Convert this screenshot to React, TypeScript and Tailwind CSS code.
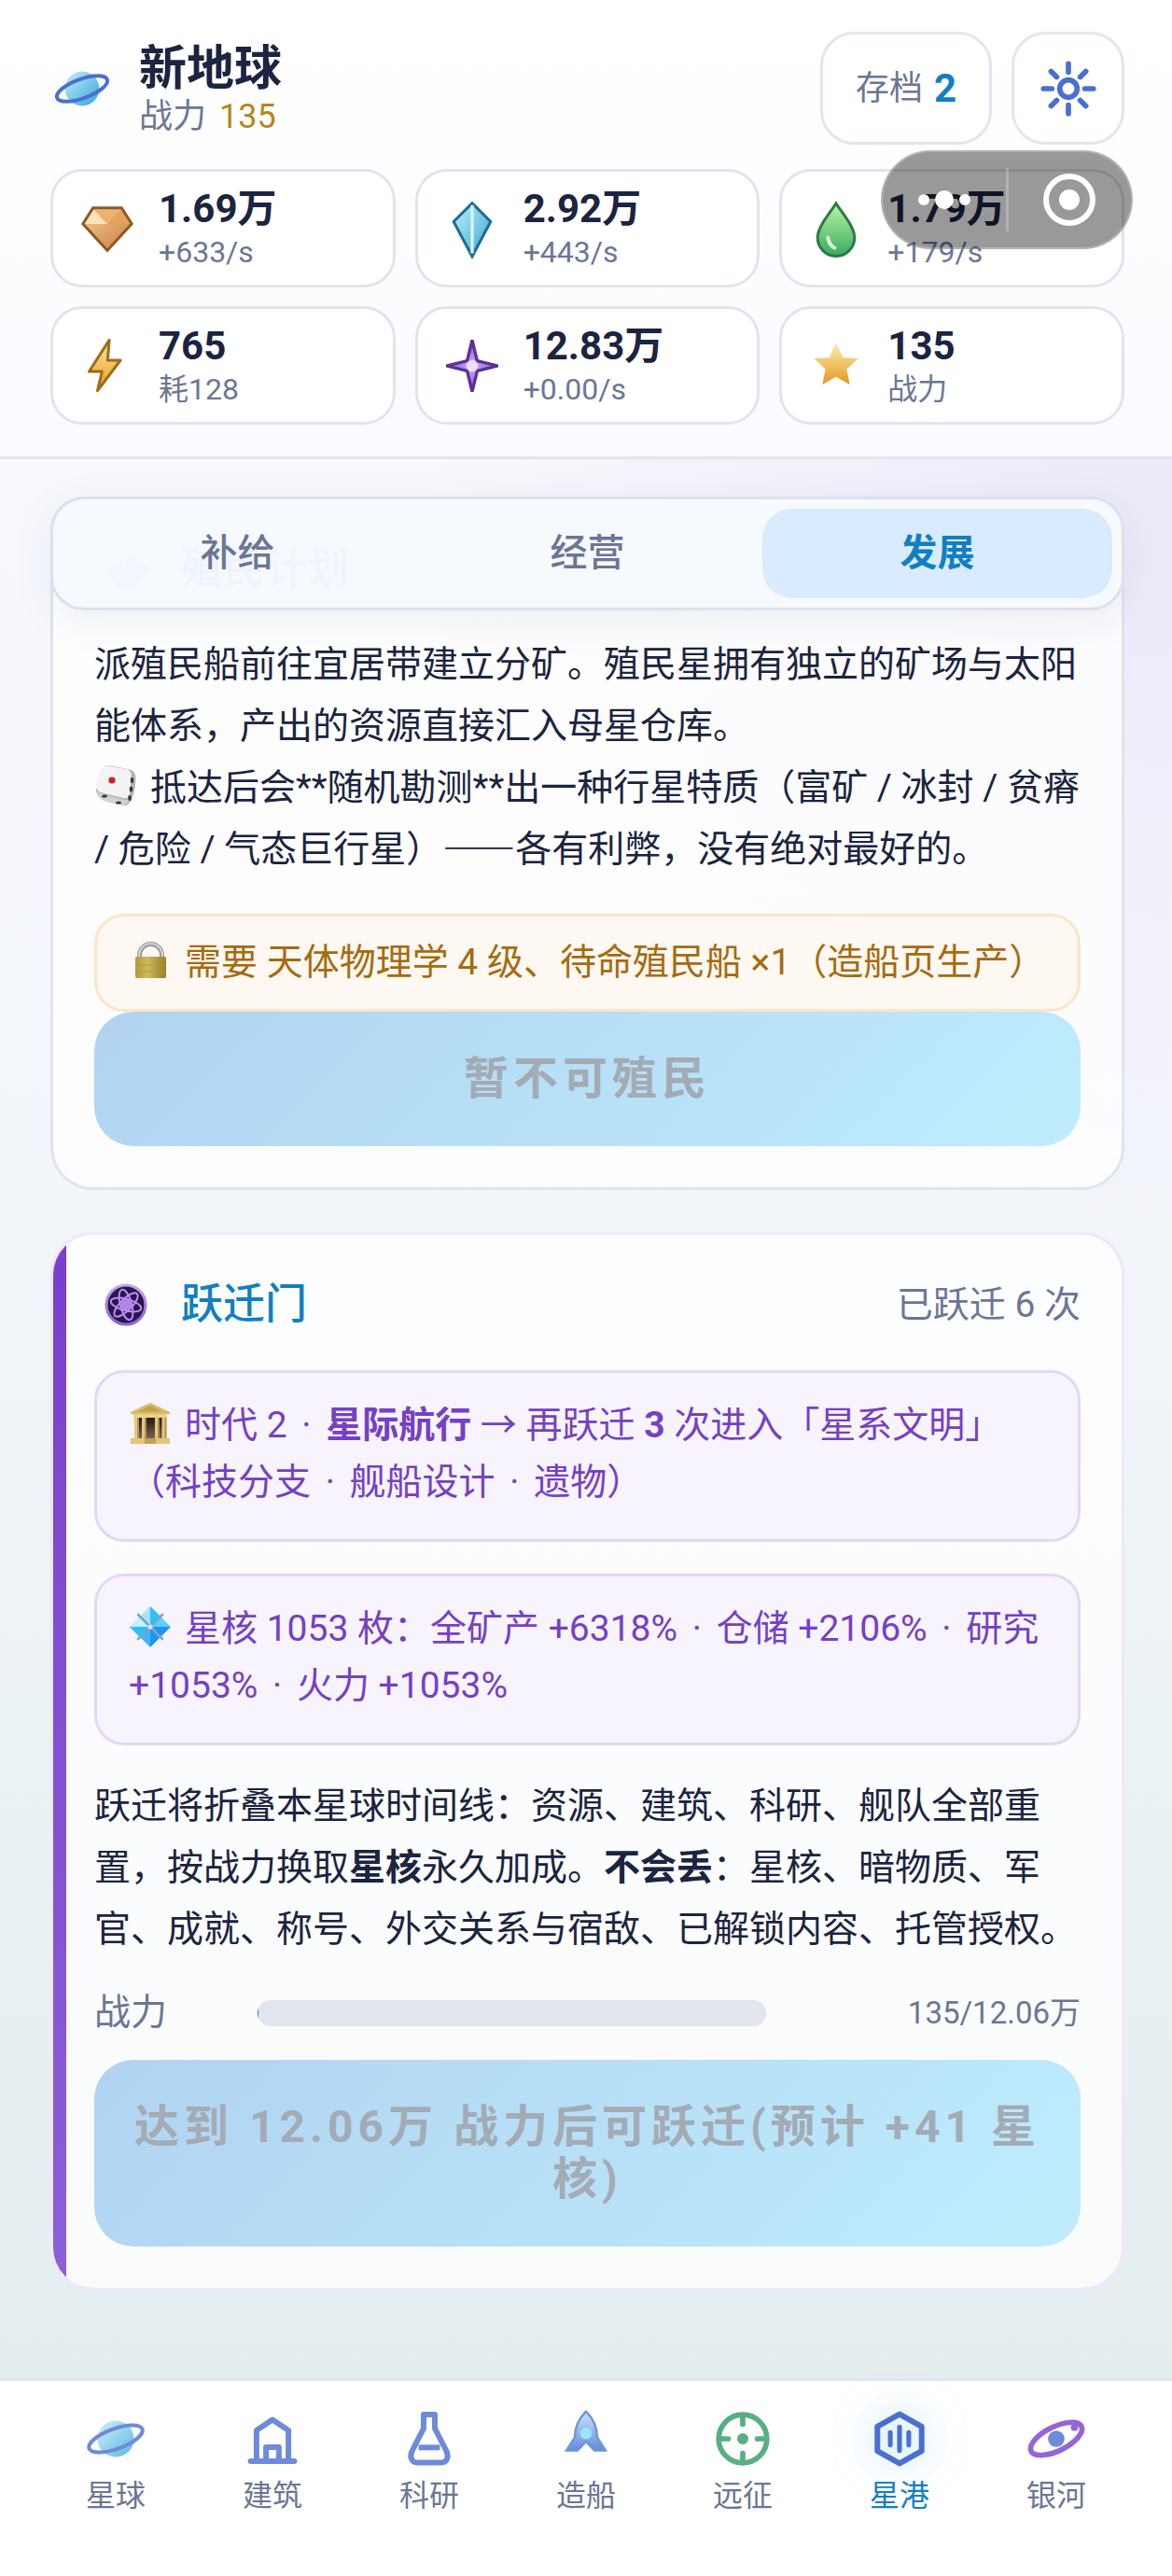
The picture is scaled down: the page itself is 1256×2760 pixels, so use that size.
import type { ReactNode } from "react";

type IconProps = { className?: string };

function PlanetIcon({ className }: IconProps) {
  return (
    <svg viewBox="0 0 24 24" fill="none" className={className} aria-hidden="true">
      <defs>
        <linearGradient id="planet" x1="0" y1="0" x2="1" y2="1">
          <stop offset="0" stopColor="#c4effa" />
          <stop offset="1" stopColor="#34a5d8" />
        </linearGradient>
      </defs>
      <circle cx="12" cy="12" r="6.5" fill="url(#planet)" />
      <ellipse cx="12" cy="12" rx="10.1" ry="3.6" stroke="#4a6fd0" strokeWidth="1.4" transform="rotate(-20 12 12)" />
    </svg>
  );
}

function SettingsIcon({ className }: IconProps) {
  return (
    <svg viewBox="0 0 24 24" fill="none" stroke="#4a6fd0" strokeWidth="1.9" strokeLinecap="round" className={className} aria-hidden="true">
      <circle cx="12" cy="12" r="3.1" />
      <path d="M12 3.1v3M12 17.9v3M3.1 12h3M17.9 12h3M5.8 5.8l2 2M16.2 16.2l2 2M5.8 18.2l2-2M16.2 7.8l2-2" />
    </svg>
  );
}

function MetalIcon({ className }: IconProps) {
  return (
    <svg viewBox="0 0 24 24" className={className} aria-hidden="true">
      <defs>
        <linearGradient id="metal" x1="0" y1="0" x2="1" y2="1">
          <stop offset="0" stopColor="#f7cf98" />
          <stop offset="1" stopColor="#c47d3c" />
        </linearGradient>
      </defs>
      <path d="M6.9 4.6h10.2l3.6 5.7L12 19.8l-8.7-9.5z" fill="url(#metal)" stroke="#8f5722" strokeWidth="1" />
      <path d="M7.1 5.3 12 10.3H3.9z" fill="#fde3bd" />
      <path d="M7.4 5.3h9.2L12 10.3z" fill="#efb173" />
      <path d="M16.8 5.3 12 10.3h8.1z" fill="#e5a15e" />
    </svg>
  );
}

function CrystalIcon({ className }: IconProps) {
  return (
    <svg viewBox="0 0 24 24" className={className} aria-hidden="true">
      <defs>
        <linearGradient id="crystal" x1="0" y1="0" x2="1" y2="1">
          <stop offset="0" stopColor="#c0f1fb" />
          <stop offset="1" stopColor="#3aa3d3" />
        </linearGradient>
      </defs>
      <path d="M12 2.9 18.6 9.5 12 21.9 5.4 9.5z" fill="url(#crystal)" stroke="#1c6c94" strokeWidth="1" />
      <path d="M12 3.6v17.2" stroke="#d5f5fd" strokeWidth="1.1" />
    </svg>
  );
}

function DropIcon({ className }: IconProps) {
  return (
    <svg viewBox="0 0 24 24" className={className} aria-hidden="true">
      <defs>
        <linearGradient id="drop" x1="0" y1="0" x2="0" y2="1">
          <stop offset="0" stopColor="#b9f5a8" />
          <stop offset="1" stopColor="#3aaa5c" />
        </linearGradient>
      </defs>
      <path
        d="M12 3C14.6 7 18.6 11.4 18.6 15.2a6.6 6.6 0 0 1-13.2 0C5.4 11.4 9.4 7 12 3z"
        fill="url(#drop)"
        stroke="#2c7a45"
        strokeWidth="1"
      />
      <path d="M9.1 15.2c.2 1.7 1 3 2.4 3.7" fill="none" stroke="#d9f9d6" strokeWidth="1.3" strokeLinecap="round" />
    </svg>
  );
}

function EnergyIcon({ className }: IconProps) {
  return (
    <svg viewBox="0 0 24 24" className={className} aria-hidden="true">
      <defs>
        <linearGradient id="energy" x1="0" y1="0" x2="0" y2="1">
          <stop offset="0" stopColor="#fdea9c" />
          <stop offset="1" stopColor="#e8962a" />
        </linearGradient>
      </defs>
      <path
        d="M12.7 2.8 12.1 10h4.6L8.5 20.9l1.6-6.9H5.5z"
        fill="url(#energy)"
        stroke="#a06c16"
        strokeWidth="1"
        strokeLinejoin="round"
      />
    </svg>
  );
}

function DarkMatterIcon({ className }: IconProps) {
  return (
    <svg viewBox="0 0 24 24" className={className} aria-hidden="true">
      <defs>
        <radialGradient id="dark">
          <stop offset="0" stopColor="#d0b0fa" />
          <stop offset="1" stopColor="#8350d6" />
        </radialGradient>
      </defs>
      <path
        d="M12 2.8 13.8 10.2 21.2 12 13.8 13.8 12 21.2 10.2 13.8 2.8 12 10.2 10.2z"
        fill="url(#dark)"
        stroke="#5b3094"
        strokeWidth="1.1"
      />
      <circle cx="12" cy="12" r="2.1" fill="#eadffa" />
    </svg>
  );
}

function StarIcon({ className }: IconProps) {
  return (
    <svg viewBox="0 0 24 24" className={className} aria-hidden="true">
      <defs>
        <linearGradient id="star" x1="0" y1="0" x2="0" y2="1">
          <stop offset="0" stopColor="#fdf0b8" />
          <stop offset="1" stopColor="#e5981e" />
        </linearGradient>
      </defs>
      <path
        d="M12 3.5 14.4 9 19.9 9.3 15.8 13.2 16.9 18.7 12 15.9 7.1 18.7 8.2 13.2 4.1 9.3 9.6 9z"
        fill="url(#star)"
      />
    </svg>
  );
}

function ColonyShipIcon({ className }: IconProps) {
  return (
    <svg viewBox="0 0 24 24" fill="#94a6cf" className={className} aria-hidden="true">
      <path d="M12.700 6.500h3.200l-.6 3.600 5.200.9c-.4 2.400-1.500 4-3.400 4.800l-2 3.200H9.300l-2-3.300-4.300-2.700 6.200-2.600h2.900z" />
    </svg>
  );
}

function GateIcon({ className }: IconProps) {
  return (
    <svg viewBox="0 0 24 24" className={className} aria-hidden="true">
      <defs>
        <linearGradient id="gate-ring" x1="0" y1="0" x2="0" y2="1">
          <stop offset="0" stopColor="#c5a4ee" />
          <stop offset="1" stopColor="#8f62cf" />
        </linearGradient>
      </defs>
      <circle cx="12" cy="12" r="7.4" fill="#291650" stroke="url(#gate-ring)" strokeWidth="1.1" />
      <g fill="none" stroke="#bd90f0" strokeWidth=".7">
        <ellipse cx="12" cy="12" rx="5.9" ry="2.2" transform="rotate(15 12 12)" />
        <ellipse cx="12" cy="12" rx="5.9" ry="2.2" transform="rotate(75 12 12)" />
        <ellipse cx="12" cy="12" rx="5.9" ry="2.2" transform="rotate(135 12 12)" />
      </g>
      <circle cx="12" cy="12" r="2.1" fill="#b184ea" />
    </svg>
  );
}

const inlineIcon = "mr-3.5 inline-block size-[46px] align-[-8px]";

function DiceIcon() {
  return (
    <svg viewBox="0 0 46 46" className={inlineIcon} role="img" aria-label="骰子">
      <path
        d="M12 1.5h7l19 4c3.500.7 6 3.500 6.300 8 .4 7-1 17-4.800 25-1.800 4-4.500 6-8.500 5.400L14 40C7 38 2 33 2 27z"
        fill="#b4b4b8"
      />
      <path d="M9 4c2-2 5-2.700 9-2l16 3c4 .8 6 3.200 5.700 7.500L38 31c-.4 4.500-3 6-7 5L9 30.500c-5-1.200-7-4-7-8.500 0-6 3-14 7-18z" fill="#f3f3f5" />
      <path d="M3 28c3 3 6 4 10 5l18 5c4 1 6.500-.5 7.500-4-.3 5-3 9-7.500 9.500L14 40C8 38 4 34 3 28z" fill="#d2d2d5" />
      <circle cx="19" cy="17" r="3.600" fill="#cf1f2b" />
      <g fill="#3a3a3d">
        <ellipse cx="40.500" cy="17" rx="1.800" ry="3" />
        <ellipse cx="39.500" cy="26.500" rx="1.800" ry="3" />
        <ellipse cx="38" cy="36" rx="1.800" ry="3" />
        <ellipse cx="11" cy="34" rx="3" ry="1.600" />
        <ellipse cx="26" cy="41" rx="3" ry="1.600" />
      </g>
    </svg>
  );
}

function LockIcon() {
  return (
    <svg viewBox="0 0 46 46" className={inlineIcon} role="img" aria-label="锁定">
      <defs>
        <linearGradient id="lock-body" x1="0" y1="0" x2="1" y2="0">
          <stop offset="0" stopColor="#b39a3a" />
          <stop offset=".4" stopColor="#cdb95a" />
          <stop offset="1" stopColor="#96802a" />
        </linearGradient>
      </defs>
      <path d="M11.500 25V17.500a12 12 0 0 1 24 0V25" fill="none" stroke="#9b9da1" strokeWidth="5" />
      <path d="M11 25V17.500a12.500 12.500 0 0 1 25 0V25" fill="none" stroke="#dcdde0" strokeWidth="1.600" />
      <rect x="7" y="19" width="33" height="23" rx="2" fill="url(#lock-body)" />
      <path d="M8 28h31M8 35h31" stroke="#b09a40" strokeWidth="1" />
    </svg>
  );
}

function TempleIcon() {
  return (
    <svg viewBox="0 0 46 46" className={inlineIcon} role="img" aria-label="时代">
      <defs>
        <linearGradient id="temple-door" x1="0" y1="0" x2="0" y2="1">
          <stop offset="0" stopColor="#1d100a" />
          <stop offset="1" stopColor="#7a6257" />
        </linearGradient>
      </defs>
      <path d="M7 15h32v24H7z" fill="url(#temple-door)" />
      <path d="M23 1 44 11v2H2v-2z" fill="#d8bb68" />
      <path d="M23 4 36 10.500H10z" fill="#c3a24f" />
      <path d="M5 13h36v4H5z" fill="#e8d28c" />
      <path d="M6 17h5v22H6zM14 17h4.500v22H14zM28 17h4.500v22H28zM35.500 17h5v22h-5z" fill="#e2c97d" />
      <path d="M9 17h2v22H9zM17 17h1.500v22H17zM31 17h1.500v22H31zM38.500 17h2v22h-2z" fill="#b7964a" />
      <path d="M2 39h42v6H2z" fill="#e0c678" />
      <path d="M17 39h12v6H17z" fill="#c2a152" />
    </svg>
  );
}

function StarCoreIcon() {
  return (
    <svg viewBox="0 0 46 46" className={inlineIcon} role="img" aria-label="星核">
      <path d="M23 1v22H1z" fill="#a5e4fb" />
      <path d="M23 1l22 22H23z" fill="#5fd0fc" />
      <path d="M1 23h22v22z" fill="#44b4f7" />
      <path d="M45 23H23v22z" fill="#1f93f4" />
      <path d="M23 1l11 11-11 11zM1 23l11 11 11-11z" fill="#2cc0fb" />
      <path d="M12 12l11 11H1z" fill="#c8f0fd" />
      <path d="M10 10l26 26M36 10 10 36" stroke="#7aa3c4" strokeWidth="2.600" strokeLinecap="round" />
      <circle cx="23" cy="23" r="2.600" fill="#cfe9f7" />
    </svg>
  );
}

function BuildingIcon({ className }: IconProps) {
  return (
    <svg viewBox="0 0 24 24" fill="none" stroke="#4a6fd0" strokeWidth="2" strokeLinejoin="round" className={className} aria-hidden="true">
      <path d="M6.300 20V9L12 5.200 17.700 9v11M9.700 20v-5h4.600v5" />
      <path d="M4.200 20h15.600" strokeLinecap="round" />
    </svg>
  );
}

function FlaskIcon({ className }: IconProps) {
  return (
    <svg viewBox="0 0 24 24" fill="none" stroke="#4a6fd0" strokeWidth="2" strokeLinejoin="round" className={className} aria-hidden="true">
      <path d="M10 3.300h4v5l4.200 8.200c.9 2.200 0 4-2 4H7.800c-2 0-2.900-1.800-2-4L10 8.300z" />
      <path d="M8.200 15.100h7.600" />
    </svg>
  );
}

function RocketIcon({ className }: IconProps) {
  return (
    <svg viewBox="0 0 24 24" className={className} aria-hidden="true">
      <defs>
        <linearGradient id="rocket" x1="0" y1="0" x2="0" y2="1">
          <stop offset="0" stopColor="#bfe0fb" />
          <stop offset="1" stopColor="#3f6fd0" />
        </linearGradient>
      </defs>
      <path
        d="M12 2.200c2.700 2.700 4 6 4 9.300l3 4.700h-4L12 13l-3 3.200H5l3-4.700c0-3.300 1.300-6.600 4-9.300z"
        fill="url(#rocket)"
        stroke="#4a7bd2"
        strokeWidth=".8"
      />
      <circle cx="12" cy="10.100" r="2.100" fill="#7fe0f8" />
    </svg>
  );
}

function ExpeditionIcon({ className }: IconProps) {
  return (
    <svg viewBox="0 0 24 24" fill="none" stroke="#2f9c68" strokeWidth="1.900" strokeLinecap="round" className={className} aria-hidden="true">
      <circle cx="12" cy="12" r="8.600" />
      <path d="M12 3.600v3.200M12 17.200v3.200M3.600 12h3.200M17.200 12h3.200" />
      <circle cx="12" cy="12" r="2" fill="#2f9c68" stroke="none" />
    </svg>
  );
}

function StarportIcon({ className }: IconProps) {
  return (
    <svg viewBox="0 0 24 24" fill="none" stroke="#4a6fd0" strokeWidth="2" strokeLinecap="round" strokeLinejoin="round" className={className} aria-hidden="true">
      <path d="M12 3.200 19.900 7.600v8.800L12 20.800 4.100 16.400V7.600z" />
      <path d="M8.700 9.800v4.400M12 7.800v8.400M15.300 9.800v4.400" strokeWidth="1.700" />
    </svg>
  );
}

function GalaxyIcon({ className }: IconProps) {
  return (
    <svg viewBox="0 0 24 24" fill="none" className={className} aria-hidden="true">
      <ellipse cx="12" cy="12" rx="10" ry="4.300" stroke="#7a3fcd" strokeWidth="1.900" transform="rotate(-26 12 12)" />
      <circle cx="12" cy="12" r="2.950" fill="#4a6fd0" />
      <circle cx="18.500" cy="7.900" r="1.300" fill="#7a3fcd" />
    </svg>
  );
}

const resources = [
  { value: "1.69万", note: "+633/s", Icon: MetalIcon },
  { value: "2.92万", note: "+443/s", Icon: CrystalIcon },
  { value: "1.79万", note: "+179/s", Icon: DropIcon },
  { value: "765", note: "耗128", Icon: EnergyIcon },
  { value: "12.83万", note: "+0.00/s", Icon: DarkMatterIcon },
  { value: "135", note: "战力", Icon: StarIcon },
];

const tabs = ["补给", "经营", "发展"];

const navItems = [
  { label: "星球", Icon: PlanetIcon },
  { label: "建筑", Icon: BuildingIcon },
  { label: "科研", Icon: FlaskIcon },
  { label: "造船", Icon: RocketIcon },
  { label: "远征", Icon: ExpeditionIcon },
  { label: "星港", Icon: StarportIcon },
  { label: "银河", Icon: GalaxyIcon },
];

// Floating host-app capsule: menu and close
function Capsule() {
  return (
    <div className="absolute top-[161px] right-[42px] flex h-[106px] w-[270px] items-center rounded-full border-2 border-white/25 bg-black/40">
      <button type="button" aria-label="更多" className="flex flex-1 items-center justify-center gap-1.5">
        <span className="size-3 rounded-full bg-white" />
        <span className="size-5 rounded-full bg-white" />
        <span className="size-3 rounded-full bg-white" />
      </button>
      <span className="h-[68px] w-[3px] bg-white/25" />
      <button type="button" aria-label="关闭" className="flex flex-1 items-center justify-center">
        <span className="flex size-14 items-center justify-center rounded-full border-6 border-white">
          <span className="size-[22px] rounded-full bg-white" />
        </span>
      </button>
    </div>
  );
}

function Header() {
  return (
    <header className="relative border-b-3 border-[#e0e5ee] bg-linear-to-b from-white to-[#fafbff] pt-[34px] pr-[51px] pb-[34px] pl-[54px]">
      <div className="flex items-center">
        <PlanetIcon className="size-[68px]" />
        <div className="ml-[27px] flex-1 pt-1.5">
          <h1 className="text-[51px] leading-[54px] font-bold">新地球</h1>
          <p className="flex gap-3.5 text-[36px] leading-12 text-[#6b7696]">
            战力 <span className="text-[#b5871a]">135</span>
          </p>
        </div>
        <button
          type="button"
          className="flex h-[121px] items-center gap-3 rounded-[36px] border-3 border-[#e2e6f0] bg-white px-[35px] text-[36px] text-[#6b7696]"
        >
          存档 <strong className="text-[42px] text-[#117fc2]">2</strong>
        </button>
        <button
          type="button"
          aria-label="设置"
          className="ml-[21px] flex size-[121px] items-center justify-center rounded-[36px] border-3 border-[#e2e6f0] bg-white"
        >
          <SettingsIcon className="size-[72px]" />
        </button>
      </div>
      <ul className="mt-[26px] grid grid-cols-3 gap-x-[21px] gap-y-5">
        {resources.map(({ value, note, Icon }) => (
          <li key={value} className="flex h-[127px] items-center gap-[19px] rounded-[34px] border-3 border-[#e0e4ee] bg-white px-[22px]">
            <Icon className="size-[72px]" />
            <div className="pt-0.5">
              <p className="text-[42px] leading-12 font-bold">{value}</p>
              <p className="text-[32px] leading-11 text-[#6b7696]">{note}</p>
            </div>
          </li>
        ))}
      </ul>
      <Capsule />
    </header>
  );
}

function CardHeading({ icon, title, extra }: { icon: ReactNode; title: string; extra?: string }) {
  return (
    <div className="flex h-[62px] items-center">
      {icon}
      <h2 className="ml-[25px] flex-1 text-[45px] font-medium text-[#117fc2]">{title}</h2>
      {extra && <span className="text-[39px] text-[#6b7696]">{extra}</span>}
    </div>
  );
}

function DisabledButton({ children }: { children: ReactNode }) {
  return (
    <button
      type="button"
      disabled
      className="block w-full rounded-[42px] bg-linear-135 from-[#b1d3f1] to-[#beedfd] px-10 py-11 text-[48px] leading-14 font-bold tracking-[5px] text-[#a3abb5]"
    >
      {children}
    </button>
  );
}

function PurpleNote({ children }: { children: ReactNode }) {
  return (
    <p className="rounded-[32px] border-3 border-[#e3d7f8] bg-[#f7f4fd] px-[34px] pt-[26px] pb-[30px] text-[39px] leading-[61px] text-[#7640c4]">
      {children}
    </p>
  );
}

function Dot() {
  return <span className="mx-1.5">·</span>;
}

function Tabs() {
  return (
    <div
      role="tablist"
      className="absolute inset-x-0 top-0 z-10 flex rounded-[36px] border-3 border-[#dae2ed] bg-[#f6faff]/96 p-2.5 shadow-[0_10px_44px_rgba(40,60,100,0.08)]"
    >
      {tabs.map((tab) => (
        <button
          key={tab}
          type="button"
          role="tab"
          aria-selected={tab === "发展"}
          className={
            tab === "发展"
              ? "h-24 flex-1 rounded-[32px] bg-[#d8ebff] text-[40px] font-bold text-[#117fc2]"
              : "h-24 flex-1 text-[40px] font-medium text-[#6b7696]"
          }
        >
          {tab}
        </button>
      ))}
    </div>
  );
}

function ColonyCard() {
  return (
    <section className="rounded-[46px] border-3 border-[#dfe4ee] bg-white/80 p-11">
      <CardHeading icon={<ColonyShipIcon className="size-[68px]" />} title="殖民计划" />
      <p className="mt-[38px] text-[39px] leading-[66px]">
        派殖民船前往宜居带建立分矿。殖民星拥有独立的矿场与太阳能体系，产出的资源直接汇入母星仓库。
        <br />
        <DiceIcon />
        抵达后会**随机勘测**出一种行星特质（富矿 / 冰封 / 贫瘠 / 危险 / 气态巨行星）
        <span className="font-['Noto_Sans_CJK_SC',sans-serif] leading-none">——</span>各有利弊，没有绝对最好的。
      </p>
      <p className="mt-9 rounded-[32px] border-3 border-[#fbe5c8] bg-[#fdf8f2] py-[19px] pr-6 pl-[34px] text-[39px] leading-[61px] text-[#a66b0e]">
        <LockIcon />
        需要 天体物理学 4 级、待命殖民船 ×1（造船页生产）
      </p>
      <DisabledButton>暂不可殖民</DisabledButton>
    </section>
  );
}

function JumpGateCard() {
  const power = 135;
  const target = 120600;

  return (
    <section className="relative mt-[45px] overflow-hidden rounded-[46px] border-3 border-[#efe7fb] bg-white/80 p-11">
      <span className="absolute inset-y-0 left-0 w-3.5 bg-linear-to-b from-[#7a3fcd] to-[#8b60d8]" />
      <CardHeading icon={<GateIcon className="size-[68px]" />} title="跃迁门" extra="已跃迁 6 次" />
      <div className="mt-[39px] flex flex-col gap-[34px]">
        <PurpleNote>
          <TempleIcon />
          时代 2 <Dot /> <strong>星际航行</strong> → 再跃迁 <strong>3</strong> 次进入「星系文明」
          <br />
          （科技分支 <Dot /> 舰船设计 <Dot /> 遗物）
        </PurpleNote>
        <PurpleNote>
          <StarCoreIcon />
          星核 1053 枚：全矿产 +6318% <Dot /> 仓储 +2106% <Dot /> 研究 +1053% <Dot /> 火力 +1053%
        </PurpleNote>
      </div>
      <p className="mt-8 text-[39px] leading-[66px]">
        跃迁将折叠本星球时间线：资源、建筑、科研、舰队全部重置，按战力换取<strong>星核</strong>永久加成。
        <strong>不会丢</strong>：星核、暗物质、军官、成就、称号、外交关系与宿敌、已解锁内容、托管授权。
      </p>
      <div className="mt-[26px] mb-5 flex h-[61px] items-center text-[#6b7696]">
        <span className="w-[175px] text-[39px]">战力</span>
        <div
          role="progressbar"
          aria-label="战力"
          aria-valuenow={power}
          aria-valuemax={target}
          className="h-7 flex-1 overflow-hidden rounded-full bg-[#e2e5ed]"
        >
          <div className="h-full bg-[#117fc2]" style={{ width: `${(power / target) * 100}%` }} />
        </div>
        <span className="w-[337px] text-right text-[33px]">135/12.06万</span>
      </div>
      <DisabledButton>达到 12.06万 战力后可跃迁(预计 +41 星核)</DisabledButton>
    </section>
  );
}

function BottomNav() {
  return (
    <nav className="mt-auto flex h-[212px] border-t-3 border-[#e0e5ee] bg-white px-10 pt-[26px]">
      {navItems.map(({ label, Icon }) => {
        const active = label === "星港";
        return (
          <a
            key={label}
            href={`#${label}`}
            aria-current={active ? "page" : undefined}
            className={`flex flex-1 flex-col items-center text-[32px] leading-[50px] ${active ? "text-[#117fc2]" : "text-[#6b7696]"}`}
          >
            <Icon className={active ? "size-[72px] drop-shadow-[0_0_20px_rgba(90,190,250,0.55)]" : "size-[72px] opacity-80"} />
            {label}
          </a>
        );
      })}
    </nav>
  );
}

export default function App() {
  return (
    <div
      lang="zh-CN"
      className="flex min-h-screen flex-col bg-[radial-gradient(circle_at_100%_20%,#ece9f9_0,transparent_32%),linear-gradient(180deg,#fafbff_0%,#f6f8fc_25%,#f2f5fa_48%,#ebf2f4_68%,#e4edf0_92%)] font-[Roboto,'Noto_Sans_CJK_SC',sans-serif] text-[#1b2440]"
    >
      <Header />
      <main className="pt-10 pr-[51px] pb-20 pl-[54px]">
        <div className="relative">
          <Tabs />
          <ColonyCard />
        </div>
        <JumpGateCard />
      </main>
      <BottomNav />
    </div>
  );
}
